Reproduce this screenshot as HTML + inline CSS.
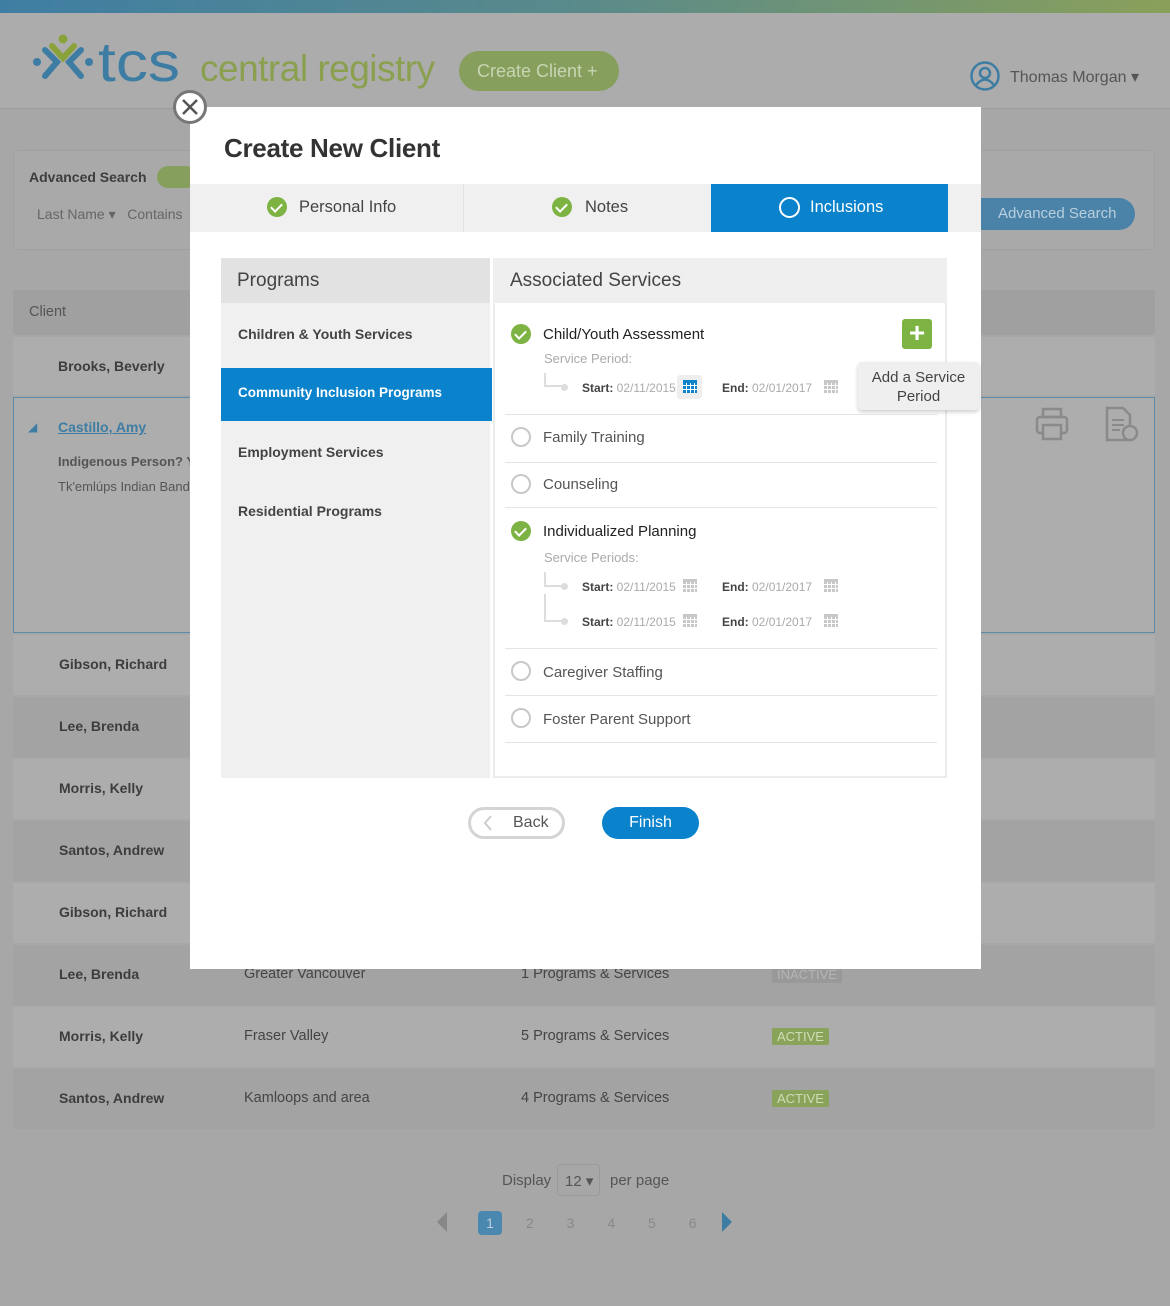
<!DOCTYPE html>
<html><head><meta charset="utf-8"><style>
*{box-sizing:border-box;margin:0;padding:0}
body{width:1170px;height:1306px;position:relative;overflow:hidden;background:#a7a7a7;font-family:"Liberation Sans",sans-serif;color:#444}
.a{position:absolute}
.row{position:absolute;left:13px;width:1142px;height:60px}
.lt{background:#adadad}.dk{background:#a3a3a3}
.nm{position:absolute;left:46px;top:21px;font-weight:bold;font-size:14px;color:#3d3d3d}
.t{position:absolute;font-size:14.5px;color:#444}
.chk{position:absolute;width:20px;height:20px;border-radius:50%;background:#7cb342}
.chk:after{content:"";position:absolute;left:6px;top:4px;width:5px;height:9px;border:solid #fff;border-width:0 2.5px 2.5px 0;transform:rotate(45deg)}
.rad{position:absolute;width:20px;height:20px;border-radius:50%;border:2px solid #c8c8c8;background:#fff}
.ln{position:absolute;left:505px;width:432px;height:1px;background:#e4e4e4}
.svc{position:absolute;left:543px;font-size:15px;color:#555}
.per{position:absolute;font-size:12px;color:#aaa}
.per b{color:#444}
.cal{position:absolute;width:14px;height:13px;background:
repeating-linear-gradient(90deg,transparent 0 3px,#fff 3px 4px),repeating-linear-gradient(0deg,transparent 0 3px,#fff 3px 4px) ,#c8c8c8;border-top:3px solid #c8c8c8}
.pg{position:absolute;left:17px;font-size:14px;font-weight:bold;color:#444}
</style></head><body>
<div class="a" style="left:0;top:0;width:1170px;height:13px;background:linear-gradient(90deg,#3f7ea3,#5a8a8a 50%,#8aa05a)"></div>
<div class="a" style="left:0;top:13px;width:1170px;height:96px;background:#acacac;border-bottom:1px solid #9c9c9c"></div>
<!-- logo -->
<svg class="a" style="left:32px;top:34px" width="160" height="54" viewBox="0 0 160 54">
<circle cx="31" cy="5" r="4.5" fill="#8aa23a"/><path d="M20 12 L31 24 L42 12" stroke="#8aa23a" stroke-width="6" fill="none" stroke-linecap="round"/>
<circle cx="5" cy="28" r="4" fill="#3e7da3"/><circle cx="57" cy="28" r="4" fill="#3e7da3"/>
<path d="M13 16 L25 28 L13 42 M49 16 L37 28 L49 42" stroke="#3e7da3" stroke-width="6" fill="none" stroke-linecap="round"/>
<text x="66" y="47" font-family="Liberation Sans" font-size="56" fill="#3e7da3" textLength="82" lengthAdjust="spacingAndGlyphs">tcs</text></svg>
<div class="a" style="left:200px;top:48px;font-size:37px;color:#8aa04e;letter-spacing:-0.5px">central registry</div>
<div class="a" style="left:459px;top:51px;width:160px;height:40px;border-radius:20px;background:#869f5c;color:#c8d4b4;font-size:18px;line-height:40px;padding-left:18px">Create Client +</div>
<svg class="a" style="left:969px;top:60px" width="32" height="32"><circle cx="16" cy="16" r="13.5" stroke="#3e7da3" stroke-width="2.5" fill="none"/><circle cx="16" cy="13" r="5" stroke="#3e7da3" stroke-width="2.5" fill="none"/><path d="M7 25 Q16 14 25 25" stroke="#3e7da3" stroke-width="2.5" fill="none"/></svg>
<div class="a" style="left:1010px;top:67px;font-size:16px;color:#555">Thomas Morgan ▾</div>

<!-- search box -->
<div class="a" style="left:13px;top:150px;width:1142px;height:100px;background:#a9a9a9;border-radius:6px;border:1px solid #a0a0a0"></div>
<div class="a" style="left:29px;top:169px;font-weight:bold;font-size:14px;color:#3d3d3d">Advanced Search</div>
<div class="a" style="left:157px;top:166px;width:40px;height:22px;border-radius:11px;background:#869f5c"></div>
<div class="a" style="left:37px;top:206px;font-size:14px;color:#666">Last Name ▾ &nbsp; Contains</div>
<div class="a" style="left:960px;top:198px;width:175px;height:32px;border-radius:16px;background:#4a82a8;color:#b9cfde;font-size:15px;line-height:32px;padding-left:38px">Advanced Search</div>

<!-- table -->
<div class="row" style="top:290px;height:45px;background:#a0a0a0"><div class="t" style="left:16px;top:14px;color:#555">Client</div></div>
<div class="row lt" style="top:337px;height:58px"><div class="nm" style="top:21px;left:45px">Brooks, Beverly</div></div>
<div class="row" style="top:397px;height:236px;background:#adadad;border:1px solid #5b8aaa">
<div class="a" style="left:14px;top:22px;color:#3e7da3;font-size:12px">◢</div>
<div class="nm" style="top:21px;left:44px;color:#3e7da3;text-decoration:underline">Castillo, Amy</div>
<div class="t" style="left:44px;top:56px;font-size:13px;font-weight:bold;color:#555">Indigenous Person? Y</div>
<div class="t" style="left:44px;top:81px;font-size:13px;color:#555">Tk'emlúps Indian Band</div>
</div>
<div class="row lt" style="top:635px"><div class="nm">Gibson, Richard</div></div>
<div class="row dk" style="top:697px"><div class="nm">Lee, Brenda</div></div>
<div class="row lt" style="top:759px"><div class="nm">Morris, Kelly</div></div>
<div class="row dk" style="top:821px"><div class="nm">Santos, Andrew</div></div>
<div class="row lt" style="top:883px"><div class="nm">Gibson, Richard</div></div>
<div class="row dk" style="top:945px"><div class="nm">Lee, Brenda</div><div class="t" style="left:231px;top:21px">Greater Vancouver</div><div class="t" style="left:508px;top:21px">1 Programs &amp; Services</div><div class="a" style="left:759px;top:21px;background:#999;color:#b5b5b5;font-size:13px;padding:1px 5px;border-radius:2px">INACTIVE</div></div>
<div class="row lt" style="top:1007px"><div class="nm">Morris, Kelly</div><div class="t" style="left:231px;top:21px">Fraser Valley</div><div class="t" style="left:508px;top:21px">5 Programs &amp; Services</div><div class="a" style="left:759px;top:21px;background:#8aa35a;color:#cfdcb6;font-size:13px;padding:1px 5px;border-radius:2px">ACTIVE</div></div>
<div class="row dk" style="top:1069px"><div class="nm">Santos, Andrew</div><div class="t" style="left:231px;top:21px">Kamloops and area</div><div class="t" style="left:508px;top:21px">4 Programs &amp; Services</div><div class="a" style="left:759px;top:21px;background:#8aa35a;color:#cfdcb6;font-size:13px;padding:1px 5px;border-radius:2px">ACTIVE</div></div>
<!-- icons right -->
<svg class="a" style="left:1034px;top:406px" width="36" height="36"><rect x="9" y="3" width="18" height="8" fill="none" stroke="#8a8a8a" stroke-width="2.5"/><rect x="3" y="11" width="30" height="16" rx="3" fill="none" stroke="#8a8a8a" stroke-width="2.5"/><rect x="9" y="19" width="18" height="14" fill="#adadad" stroke="#8a8a8a" stroke-width="2.5"/></svg>
<svg class="a" style="left:1104px;top:406px" width="36" height="38"><path d="M3 2H19L26 9V34H3Z" fill="none" stroke="#8a8a8a" stroke-width="2.5"/><path d="M8 14H20M8 19H20M8 24H16" stroke="#8a8a8a" stroke-width="2"/><circle cx="26" cy="27" r="7" fill="#adadad" stroke="#8a8a8a" stroke-width="2.5"/></svg>

<!-- pagination -->
<div class="a" style="left:502px;top:1172px;font-size:15px;color:#555">Display</div>
<div class="a" style="left:557px;top:1164px;width:43px;height:32px;border:1px solid #999;border-radius:4px;font-size:15px;color:#555;padding:7px 0 0 7px">12 ▾</div>
<div class="a" style="left:610px;top:1172px;font-size:15px;color:#555">per page</div>
<div class="a" style="left:437px;top:1212px;width:0;height:0;border:10px solid transparent;border-right:10px solid #888;border-left:0"></div>
<div class="a" style="left:478px;top:1211px;width:24px;height:24px;border-radius:4px;background:#4a88b0;color:#bcd;font-size:14px;text-align:center;line-height:24px">1</div>
<div class="a" style="left:526px;top:1215px;font-size:14px;color:#888;word-spacing:29px">2 3 4 5 6</div>
<div class="a" style="left:722px;top:1212px;width:0;height:0;border:10px solid transparent;border-left:10px solid #3e7da3;border-right:0"></div>

<!-- modal -->
<div class="a" style="left:190px;top:107px;width:791px;height:862px;background:#fff"></div>
<div class="a" style="left:173px;top:90px;width:34px;height:34px;border-radius:50%;background:#fff;border:3px solid #777"><svg width="28" height="28" style="position:absolute;left:0;top:0"><path d="M7 7L21 21M21 7L7 21" stroke="#555" stroke-width="2.5"/></svg></div>
<div class="a" style="left:224px;top:133px;font-size:26px;font-weight:bold;color:#333;letter-spacing:-0.3px">Create New Client</div>
<div class="a" style="left:190px;top:184px;width:791px;height:48px;background:#f0f0f0"></div>
<div class="a" style="left:463px;top:184px;width:1px;height:48px;background:#e2e2e2"></div>
<div class="chk" style="left:267px;top:197px"></div><div class="a" style="left:299px;top:198px;font-size:16.5px;color:#444">Personal Info</div>
<div class="chk" style="left:552px;top:197px"></div><div class="a" style="left:585px;top:198px;font-size:16.5px;color:#444">Notes</div>
<div class="a" style="left:711px;top:184px;width:237px;height:48px;background:#0a82cc"></div>
<div class="a" style="left:779px;top:197px;width:21px;height:21px;border-radius:50%;border:2.5px solid #fff"></div>
<div class="a" style="left:810px;top:198px;font-size:16.5px;color:#fff">Inclusions</div>

<div class="a" style="left:221px;top:258px;width:269px;height:520px;background:#f0f0f0"></div>
<div class="a" style="left:221px;top:258px;width:269px;height:45px;background:#e2e2e2"></div>
<div class="a" style="left:237px;top:270px;font-size:19px;color:#444">Programs</div>
<div class="pg" style="left:238px;top:326px">Children &amp; Youth Services</div>
<div class="a" style="left:221px;top:368px;width:271px;height:53px;background:#0a82cc"></div>
<div class="pg" style="left:238px;top:385px;color:#fff;font-size:13.5px">Community Inclusion Programs</div>
<div class="pg" style="left:238px;top:444px">Employment Services</div>
<div class="pg" style="left:238px;top:503px">Residential Programs</div>

<div class="a" style="left:493px;top:258px;width:454px;height:520px;border:2px solid #ececec;border-top:0"></div>
<div class="a" style="left:493px;top:258px;width:454px;height:45px;background:#efefef"></div>
<div class="a" style="left:510px;top:270px;font-size:19px;color:#444">Associated Services</div>

<div class="chk" style="left:511px;top:324px"></div>
<div class="svc" style="top:326px;color:#222">Child/Youth Assessment</div>
<div class="per" style="left:544px;top:351px;font-size:13px">Service Period:</div>
<div class="a" style="left:544px;top:373px;width:20px;height:14px;border-left:2px solid #ddd;border-bottom:2px solid #ddd"></div>
<div class="a" style="left:561px;top:384px;width:7px;height:7px;border-radius:50%;background:#ddd"></div>
<div class="per" style="left:582px;top:381px"><b>Start:</b> 02/11/2015</div>
<div class="a" style="left:677px;top:375px;width:25px;height:24px;background:#eee;border-radius:3px"></div>
<div class="cal" style="left:683px;top:380px;background-color:#0a82cc;border-top-color:#0a82cc"></div>
<div class="per" style="left:722px;top:381px"><b>End:</b> 02/01/2017</div>
<div class="cal" style="left:824px;top:380px"></div>
<div class="a" style="left:902px;top:319px;width:30px;height:30px;background:#7cb342;border-radius:3px;color:#fff;font-size:28px;line-height:28px;text-align:center;font-weight:bold">+</div>
<div class="a" style="left:858px;top:362px;width:121px;height:48px;background:#efefef;border-radius:4px;box-shadow:0 2px 4px rgba(0,0,0,.2);text-align:center;font-size:15px;line-height:19px;padding-top:6px;color:#444">Add a Service<br>Period</div>
<div class="ln" style="top:414px"></div>
<div class="rad" style="left:511px;top:427px"></div><div class="svc" style="top:429px">Family Training</div>
<div class="ln" style="top:462px"></div>
<div class="rad" style="left:511px;top:474px"></div><div class="svc" style="top:476px">Counseling</div>
<div class="ln" style="top:507px"></div>
<div class="chk" style="left:511px;top:521px"></div><div class="svc" style="top:523px;color:#222">Individualized Planning</div>
<div class="per" style="left:544px;top:550px;font-size:13px">Service Periods:</div>
<div class="a" style="left:544px;top:572px;width:20px;height:15px;border-left:2px solid #ddd;border-bottom:2px solid #ddd"></div>
<div class="a" style="left:544px;top:594px;width:20px;height:28px;border-left:2px solid #ddd;border-bottom:2px solid #ddd"></div>
<div class="a" style="left:561px;top:583px;width:7px;height:7px;border-radius:50%;background:#ddd"></div>
<div class="a" style="left:561px;top:618px;width:7px;height:7px;border-radius:50%;background:#ddd"></div>
<div class="per" style="left:582px;top:580px"><b>Start:</b> 02/11/2015</div><div class="cal" style="left:683px;top:579px"></div>
<div class="per" style="left:722px;top:580px"><b>End:</b> 02/01/2017</div><div class="cal" style="left:824px;top:579px"></div>
<div class="per" style="left:582px;top:615px"><b>Start:</b> 02/11/2015</div><div class="cal" style="left:683px;top:614px"></div>
<div class="per" style="left:722px;top:615px"><b>End:</b> 02/01/2017</div><div class="cal" style="left:824px;top:614px"></div>
<div class="ln" style="top:648px"></div>
<div class="rad" style="left:511px;top:661px"></div><div class="svc" style="top:664px">Caregiver Staffing</div>
<div class="ln" style="top:695px"></div>
<div class="rad" style="left:511px;top:708px"></div><div class="svc" style="top:711px">Foster Parent Support</div>
<div class="ln" style="top:742px"></div>

<div class="a" style="left:468px;top:807px;width:97px;height:32px;border:3px solid #d4d4d4;border-radius:16px;font-size:16px;color:#555;line-height:26px;padding-left:42px">Back</div>
<svg class="a" style="left:482px;top:814px" width="12" height="18"><path d="M9 2L3 9L9 16" stroke="#ccc" stroke-width="2" fill="none"/></svg>
<div class="a" style="left:602px;top:807px;width:97px;height:32px;background:#0a82cc;border-radius:16px;font-size:16px;color:#fff;line-height:32px;text-align:center">Finish</div>
</body></html>
